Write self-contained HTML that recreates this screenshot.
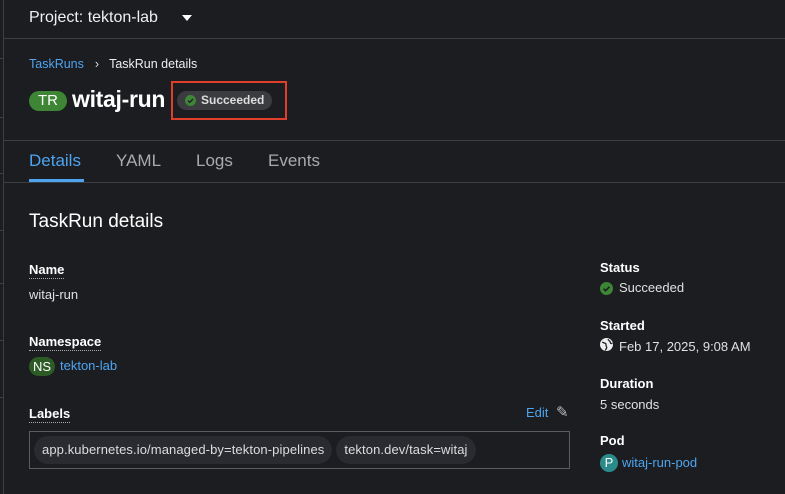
<!DOCTYPE html>
<html><head><style>
*{margin:0;padding:0;box-sizing:border-box}
body{width:785px;height:494px;overflow:hidden;background:#1b1d21;font-family:"Liberation Sans",sans-serif;color:#e0e0e0;position:relative}
.abs{position:absolute}
.vl{left:3px;top:0;width:1px;height:494px;background:#3c3f42}
.tick{left:0;width:3px;height:1px;background:#3c3f42}
.hl{left:4px;right:0;height:1px;background:#3c3f42}
.lbl{font-weight:bold;font-size:13px;color:#fff}
.dot{border-bottom:1px dotted #aaa;padding-bottom:1px}
.val{font-size:13px;color:#e0e0e0}
.link{color:#4ea4ef}
.chip{display:inline-block;background:#292b30;border-radius:14px;padding:0 8px;height:28px;line-height:28px;font-size:13px;color:#ddd;margin-right:4px;letter-spacing:0.1px}
</style></head><body>
<div class="abs vl"></div>
<div class="abs tick" style="top:58px"></div><div class="abs tick" style="top:117px"></div><div class="abs tick" style="top:173px"></div><div class="abs tick" style="top:230px"></div><div class="abs tick" style="top:283px"></div><div class="abs tick" style="top:340px"></div><div class="abs tick" style="top:397px"></div>
<div class="abs" style="left:29px;top:9px;font-size:16px;color:#f0f0f0">Project: tekton-lab</div>
<div class="abs" style="left:182px;top:15px;width:0;height:0;border-left:5px solid transparent;border-right:5px solid transparent;border-top:6px solid #fff"></div>
<div class="abs hl" style="top:38px"></div>
<div class="abs" style="left:29px;top:57px;font-size:12.5px"><span class="link">TaskRuns</span><span style="margin:0 10px 0 11px;color:#ddd">›</span><span style="color:#eee">TaskRun details</span></div>
<div class="abs" style="left:29px;top:91px;width:38px;height:20px;border-radius:10px;background:#3e8635;color:#fff;font-size:15px;line-height:20px;text-align:center">TR</div>
<div class="abs" style="left:72px;top:86px;font-size:23px;font-weight:bold;color:#fff;letter-spacing:-0.3px">witaj-run</div>
<div class="abs" style="left:177px;top:91px;width:95px;height:19px;border-radius:10px;background:#3a3c40;font-size:12px;font-weight:bold;color:#ddd;line-height:19px;padding-left:24px">Succeeded</div>
<svg class="abs" style="left:185px;top:95px" width="11" height="11" viewBox="0 0 12 12"><circle cx="6" cy="6" r="6" fill="#3e8635"/><path d="M3.3 6.2l1.8 1.8 3.6-3.6" stroke="#1b1d21" stroke-width="1.5" fill="none"/></svg>
<div class="abs" style="left:171px;top:81px;width:116px;height:39px;border:2px solid #e0402b"></div>
<div class="abs hl" style="top:140px"></div>
<div class="abs" style="left:29px;top:151px;font-size:17px;color:#4ea4ef">Details</div>
<div class="abs" style="left:29px;top:179px;width:55px;height:3px;background:#4ea4ef"></div>
<div class="abs" style="left:116px;top:151px;font-size:17px;color:#aaa">YAML</div>
<div class="abs" style="left:196px;top:151px;font-size:17px;color:#aaa">Logs</div>
<div class="abs" style="left:268px;top:151px;font-size:17px;color:#aaa">Events</div>
<div class="abs hl" style="top:182px"></div>
<div class="abs" style="left:29px;top:211px;font-size:19px;color:#fff">TaskRun details</div>
<div class="abs lbl" style="left:29px;top:262px"><span class="dot">Name</span></div>
<div class="abs val" style="left:29px;top:287px">witaj-run</div>
<div class="abs lbl" style="left:29px;top:334px"><span class="dot">Namespace</span></div>
<div class="abs" style="left:29px;top:357px;width:26px;height:19px;border-radius:10px;background:#2d5b25;color:#fff;font-size:13px;line-height:19px;text-align:center">NS</div>
<div class="abs val link" style="left:60px;top:358px">tekton-lab</div>
<div class="abs lbl" style="left:29px;top:406px"><span class="dot">Labels</span></div>
<div class="abs val link" style="left:526px;top:405px">Edit</div>
<div class="abs" style="left:556px;top:403px;font-size:15px;color:#bbb">✎</div>
<div class="abs" style="left:29px;top:431px;width:541px;height:38px;border:1px solid #5a5c60;padding:4px 4px;white-space:nowrap"><span class="chip">app.kubernetes.io/managed-by=tekton-pipelines</span><span class="chip">tekton.dev/task=witaj</span></div>
<div class="abs lbl" style="left:600px;top:260px">Status</div>
<svg class="abs" style="left:600px;top:282px" width="13" height="13" viewBox="0 0 12 12"><circle cx="6" cy="6" r="6" fill="#3e8635"/><path d="M3.3 6.2l1.8 1.8 3.6-3.6" stroke="#1b1d21" stroke-width="1.5" fill="none"/></svg>
<div class="abs val" style="left:619px;top:280px">Succeeded</div>
<div class="abs lbl" style="left:600px;top:318px">Started</div>
<svg class="abs" style="left:600px;top:338px" width="13" height="13" viewBox="0 0 12 12"><circle cx="6" cy="6" r="6" fill="#eee"/><path d="M2 4c1.5 0 2 1 3 1s0 2 1 3-1 2.5-1 3.5M7.5 1c0 1.5 2 1.5 2 3s1.5 1 2 1" stroke="#1b1d21" stroke-width="1.2" fill="none"/></svg>
<div class="abs val" style="left:619px;top:339px">Feb 17, 2025, 9:08 AM</div>
<div class="abs lbl" style="left:600px;top:376px">Duration</div>
<div class="abs val" style="left:600px;top:397px">5 seconds</div>
<div class="abs lbl" style="left:600px;top:433px">Pod</div>
<div class="abs" style="left:600px;top:454px;width:18px;height:18px;border-radius:50%;background:#2b8a8a;color:#fff;font-size:13px;line-height:18px;text-align:center">P</div>
<div class="abs val link" style="left:622px;top:455px">witaj-run-pod</div>
</body></html>
